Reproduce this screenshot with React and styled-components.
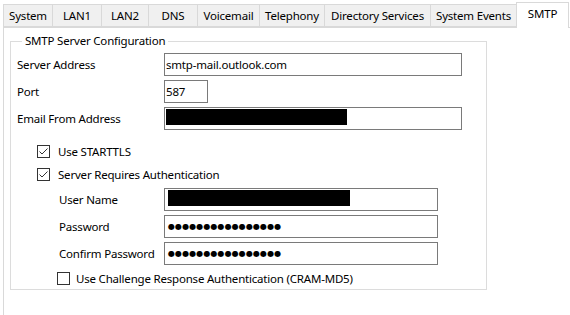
import React from 'react';
import styled, { createGlobalStyle } from 'styled-components';

const GlobalStyle = createGlobalStyle`
    html, body {
        margin: 0;
        padding: 0;
        background: #ffffff;
    }
    body {
        font-family: "Segoe UI", "Noto Sans", "Open Sans", sans-serif;
        font-size: 11.5px;
        letter-spacing: -0.2px;
        color: #000;
    }
`

const Page = styled.div`
    width: 570px;
    height: 315px;
    overflow: hidden;
    display: flex;
    flex-direction: column;
    background: #fff;
`

const TabStrip = styled.div`
    display: flex;
    align-items: flex-end;
    height: 28px;
    padding-left: 3px;
    position: relative;
    z-index: 1;
`

const Tab = styled.div`
    box-sizing: border-box;
    width: ${p => p.w}px;
    height: ${p => (p.active ? 26 : 23)}px;
    margin-bottom: ${p => (p.active ? 0 : 1)}px;
    margin-left: ${p => (p.active ? -1 : 0)}px;
    border: 1px solid #d9d9d9;
    border-left: ${p => (p.first || p.active ? '1px solid #d9d9d9' : 'none')};
    border-bottom: ${p => (p.active ? 'none' : '1px solid #d9d9d9')};
    background: ${p => (p.active ? '#ffffff' : '#f0f0f0')};
    display: flex;
    align-items: ${p => (p.active ? 'flex-start' : 'center')};
    justify-content: center;
    padding-top: ${p => (p.active ? 3 : 0)}px;
    white-space: nowrap;
`

const Panel = styled.div`
    flex: 1;
    margin-left: 3px;
    margin-top: -1px;
    border-top: 1px solid #d9d9d9;
    border-left: 1px solid #d9d9d9;
    padding: 5px 0 0 6px;
`

const GroupBox = styled.fieldset`
    box-sizing: border-box;
    width: 477px;
    margin: 0;
    border: 1px solid #dcdcdc;
    padding: 4px 0 1px 6px;
`

const Legend = styled.legend`
    padding: 0 3px;
    margin-left: 5px;
    line-height: 16px;
`

const FormRow = styled.div`
    display: flex;
    align-items: center;
    height: 23px;
    margin-top: ${p => p.mt ?? 4}px;
    margin-left: ${p => p.indent ?? 0}px;
`

const Label = styled.div`
    width: ${p => p.w}px;
    flex-shrink: 0;
`

const Field = styled.div`
    box-sizing: border-box;
    width: ${p => p.w}px;
    height: 23px;
    border: 1px solid #7a7a7a;
    background: #fff;
    padding: 0 1px;
    display: flex;
    align-items: center;
    white-space: nowrap;
    overflow: hidden;
`

const Redacted = styled.div`
    width: ${p => p.w}px;
    height: 16px;
    background: #000;
    margin-left: ${p => p.ml ?? 0}px;
    margin-top: -4px;
`

const Dots = styled.span`
    font-family: "DejaVu Sans", sans-serif;
    font-size: 8px;
    letter-spacing: 0.1px;
    margin-left: 2px;
`

const CheckRow = styled.label`
    display: flex;
    align-items: center;
    height: 20px;
    margin-top: ${p => p.mt ?? 3}px;
    margin-left: ${p => p.indent}px;
    gap: ${p => p.gap ?? 8}px;
`

const Box = styled.span`
    box-sizing: border-box;
    width: 13px;
    height: 13px;
    border: 1px solid #333;
    background: #fff;
    display: flex;
    align-items: center;
    justify-content: center;
`

function CheckBox({ checked, indent, mt, gap, children }) {
    return (
        <CheckRow indent={indent} mt={mt} gap={gap}>
            <Box>
                {checked && (
                    <svg width="11" height="11" viewBox="0 0 11 11">
                        <path d="M1.5 5.5 L4 8 L9.5 2.5" fill="none" stroke="#333" strokeWidth="1" />
                    </svg>
                )}
            </Box>
            <span>{children}</span>
        </CheckRow>
    )
}

const tabs = [
    ['System', 50],
    ['LAN1', 49],
    ['LAN2', 47],
    ['DNS', 49],
    ['Voicemail', 62],
    ['Telephony', 65],
    ['Directory Services', 106],
    ['System Events', 86],
    ['SMTP', 53],
]

export default function App() {
    const dots = '\u25CF'.repeat(16)
    return (
        <Page>
            <GlobalStyle />
            <TabStrip>
                {tabs.map(([name, w], i) => (
                    <Tab key={name} w={w} first={i === 0} active={name === 'SMTP'}>
                        {name}
                    </Tab>
                ))}
            </TabStrip>
            <Panel>
                <GroupBox>
                    <Legend>SMTP Server Configuration</Legend>
                    <FormRow mt={0}>
                        <Label w={147}>Server Address</Label>
                        <Field w={298}>smtp-mail.outlook.com</Field>
                    </FormRow>
                    <FormRow>
                        <Label w={147}>Port</Label>
                        <Field w={44}>587</Field>
                    </FormRow>
                    <FormRow>
                        <Label w={147}>Email From Address</Label>
                        <Field w={298}><Redacted w={181} /></Field>
                    </FormRow>
                    <CheckBox checked indent={20} mt={11}>Use STARTTLS</CheckBox>
                    <CheckBox checked indent={20}>Server Requires Authentication</CheckBox>
                    <FormRow indent={42}>
                        <Label w={105}>User Name</Label>
                        <Field w={274}><Redacted w={182} ml={2} /></Field>
                    </FormRow>
                    <FormRow indent={42}>
                        <Label w={105}>Password</Label>
                        <Field w={274}><Dots>{dots}</Dots></Field>
                    </FormRow>
                    <FormRow indent={42}>
                        <Label w={105}>Confirm Password</Label>
                        <Field w={274}><Dots>{dots}</Dots></Field>
                    </FormRow>
                    <CheckBox indent={40} gap={6}>Use Challenge Response Authentication (CRAM-MD5)</CheckBox>
                </GroupBox>
            </Panel>
        </Page>
    )
}
